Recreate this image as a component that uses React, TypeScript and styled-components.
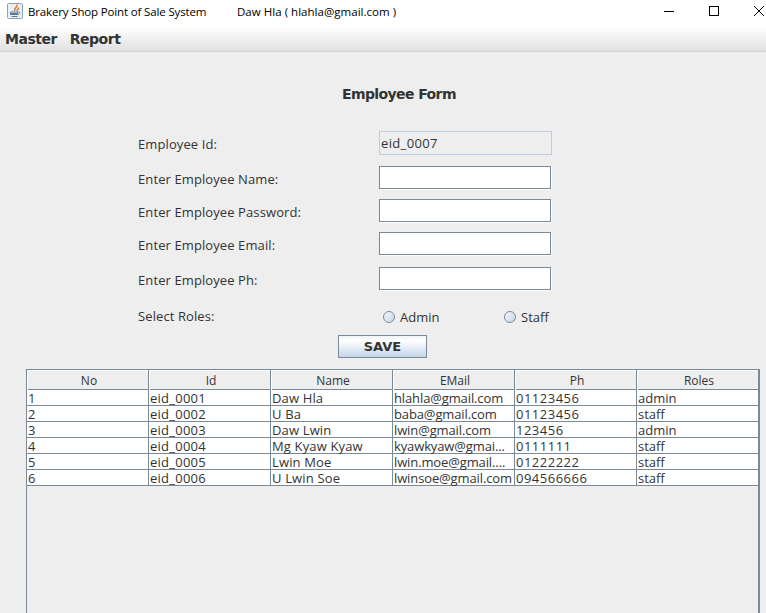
import styled, { createGlobalStyle } from "styled-components";

const GlobalStyle = createGlobalStyle`
  html, body {
    margin: 0;
    padding: 0;
    height: 100%;
    overflow: hidden;
  }
  body {
    font-family: "Open Sans", "Noto Sans", sans-serif;
    color: #333;
  }
`;

const Wrapper = styled.div`
  width: 766px;
  height: 613px;
  background: #eeeeee;
  display: flex;
  flex-direction: column;
  overflow: hidden;
`;

const TitleBar = styled.div`
  height: 27px;
  box-sizing: border-box;
  background: #fff;
  display: flex;
  align-items: center;
  padding: 0 0 4px 7px;
  font-family: "Open Sans", sans-serif;
  font-size: 11.5px;
  color: #000;
  flex-shrink: 0;
`;

const AppIcon = styled.svg`
  display: block;
  margin-top: -1px;
  flex-shrink: 0;
`;

const AppTitle = styled.div`
  margin-left: 5px;
  width: 209px;
  white-space: nowrap;
  letter-spacing: -0.15px;
`;

const UserName = styled.div`
  white-space: nowrap;
  letter-spacing: 0.03px;
`;

const WindowButtons = styled.div`
  margin-left: auto;
  margin-right: -15px;
  margin-top: -1px;
  display: flex;
  align-items: center;
  color: #000;
`;

const WindowButton = styled.div`
  width: 45px;
  height: 22px;
  display: flex;
  align-items: center;
  justify-content: center;
`;

const MenuBar = styled.div`
  height: 25px;
  box-sizing: border-box;
  display: flex;
  align-items: center;
  gap: 13px;
  padding: 0 0 0 5px;
  background: linear-gradient(#ffffff, #e0e0e0);
  border-bottom: 1px solid #d2d2d2;
  flex-shrink: 0;
`;

const MenuItem = styled.div`
  font-family: "DejaVu Sans", sans-serif;
  font-size: 14px;
  font-weight: 700;
  letter-spacing: -0.5px;
  color: #333;
`;

const FormTitle = styled.h1`
  margin: 32px 0 0 342px;
  height: 20px;
  font-family: "DejaVu Sans", sans-serif;
  font-size: 14px;
  line-height: 20px;
  font-weight: 700;
  letter-spacing: -0.6px;
  color: #333;
`;

const Form = styled.div`
  margin-top: 27px;
  padding-left: 138px;
  display: flex;
  flex-direction: column;
`;

const FormRow = styled.div<{ $height: number; $gap: number }>`
  display: grid;
  grid-template-columns: 241px 172px;
  align-items: center;
  height: ${(p) => p.$height}px;
  margin-bottom: ${(p) => p.$gap}px;
`;

const Label = styled.div`
  font-size: 13px;
  line-height: 20px;
  padding-top: 2px;
  letter-spacing: 0.1px;
  color: #333;
  white-space: nowrap;
`;

const TextField = styled.div<{ $disabled?: boolean }>`
  box-sizing: border-box;
  width: ${(p) => (p.$disabled ? "173px" : "172px")};
  height: ${(p) => (p.$disabled ? "100%" : "23px")};
  align-self: start;
  border: 1px solid ${(p) => (p.$disabled ? "#b8cfe5" : "#7a8a99")};
  background: ${(p) => (p.$disabled ? "#eeeeee" : "#fff")};
  box-shadow: ${(p) => (p.$disabled ? "none" : "1px 1px 0 #fff")};
  padding-left: 1px;
  font-size: 13px;
  line-height: 22px;
  letter-spacing: 0.35px;
  color: #333;
`;

const RadioGroup = styled.div`
  display: grid;
  grid-template-columns: 121px 1fr;
  padding-left: 4px;
  transform: translateY(2px);
`;

const RadioOption = styled.label`
  display: flex;
  align-items: center;
  gap: 5px;
  font-size: 13px;
  color: #333;
`;

const RadioDot = styled.span`
  box-sizing: border-box;
  width: 12px;
  height: 12px;
  border-radius: 50%;
  border: 1px solid #7a8a99;
  background: linear-gradient(135deg, #f4f7fb, #c6d7e8);
`;

const SaveRow = styled.div`
  padding-left: 338px;
`;

const SaveButton = styled.button`
  box-sizing: border-box;
  display: block;
  width: 89px;
  height: 23px;
  padding: 0;
  border: 1px solid #7a8a99;
  background: linear-gradient(#f0f5fa, #ffffff 25%, #c2d5e8);
  font-family: "DejaVu Sans", sans-serif;
  font-size: 13px;
  font-weight: 700;
  color: #333;
`;

const TableWrap = styled.div`
  margin: 11px 0 0 26px;
  width: 734px;
  flex: 1;
  box-sizing: border-box;
  border: 1px solid #7a8a99;
  border-right-width: 2px;
  border-bottom: none;
  background: #eeeeee;
`;

const HeaderRow = styled.div`
  display: grid;
  grid-template-columns: repeat(5, 122px) 1fr;
  height: 20px;
  box-sizing: border-box;
  border-bottom: 1px solid #7a8a99;
`;

const HeaderCell = styled.div`
  box-sizing: border-box;
  border-right: 1px solid #7a8a99;
  box-shadow: inset 1px 1px 0 #fff;
  padding-left: 3px;
  text-align: center;
  font-size: 12px;
  line-height: 19px;
  padding-top: 1px;
  color: #333;
  &:last-child {
    border-right: none;
  }
`;

const BodyRow = styled.div`
  display: grid;
  grid-template-columns: repeat(5, 122px) 121px;
  height: 16px;
  box-sizing: border-box;
  background: #fff;
  border-bottom: 1px solid #7a8a99;
`;

const BodyCell = styled.div<{ $spacing: number }>`
  box-sizing: border-box;
  height: 15px;
  border-right: 1px solid #7a8a99;
  padding: 1px 0 0 1px;
  font-size: 13px;
  line-height: 14px;
  letter-spacing: ${(p) => p.$spacing}px;
  color: #333;
  white-space: nowrap;
  &:last-child {
    border-right: none;
  }
`;

const columns = ["No", "Id", "Name", "EMail", "Ph", "Roles"];
// the digits run wider in the reference than in Open Sans
const spacing = [0, 0.25, 0.15, -0.12, 0.5, 0];

const rows = [
  ["1", "eid_0001", "Daw Hla", "hlahla@gmail.com", "01123456", "admin"],
  ["2", "eid_0002", "U Ba", "baba@gmail.com", "01123456", "staff"],
  ["3", "eid_0003", "Daw Lwin", "lwin@gmail.com", "123456", "admin"],
  ["4", "eid_0004", "Mg Kyaw Kyaw", "kyawkyaw@gmai...", "0111111", "staff"],
  ["5", "eid_0005", "Lwin Moe", "lwin.moe@gmail....", "01222222", "staff"],
  ["6", "eid_0006", "U Lwin Soe", "lwinsoe@gmail.com", "094566666", "staff"],
];

const JavaIcon = () => (
  <AppIcon width="16" height="16" viewBox="0 0 16 16">
    <rect x="0.5" y="0.5" width="15" height="15" rx="1" fill="#e9eff6" stroke="#8ca1b6" />
    <path d="M10 1.500C11 4 7 5 7.500 8M11.500 4.500c.5 1.500-1.500 2-1.500 3.500" fill="none" stroke="#e0702c" strokeWidth="1.400" />
    <path d="M3.500 9h7v1.500h-7zM3 11.500h8.500M4.500 13.500h6" fill="none" stroke="#5b7894" strokeWidth="1" />
    <path d="M10.500 9c2.500-.5 3 1.500.5 2.500" fill="none" stroke="#5b7894" strokeWidth="0.900" />
  </AppIcon>
);

const App = () => {
  return (
    <Wrapper>
      <GlobalStyle />
      <TitleBar>
        <JavaIcon />
        <AppTitle>Brakery Shop Point of Sale System</AppTitle>
        <UserName>Daw Hla ( hlahla@gmail.com )</UserName>
        <WindowButtons>
          <WindowButton>
            <svg width="10" height="10" viewBox="0 0 10 10">
              <path d="M0 5.500h10" stroke="#000" strokeWidth="1" />
            </svg>
          </WindowButton>
          <WindowButton>
            <svg width="10" height="10" viewBox="0 0 10 10">
              <rect x="0.500" y="0.500" width="9" height="9" fill="none" stroke="#000" />
            </svg>
          </WindowButton>
          <WindowButton>
            <svg width="10" height="10" viewBox="0 0 10 10">
              <path d="M0 0l10 10M10 0L0 10" stroke="#000" strokeWidth="1" />
            </svg>
          </WindowButton>
        </WindowButtons>
      </TitleBar>
      <MenuBar>
        <MenuItem>Master</MenuItem>
        <MenuItem>Report</MenuItem>
      </MenuBar>
      <FormTitle>Employee Form</FormTitle>
      <Form>
        <FormRow $height={24} $gap={11}>
          <Label>Employee Id:</Label>
          <TextField $disabled>eid_0007</TextField>
        </FormRow>
        <FormRow $height={23} $gap={10}>
          <Label>Enter Employee Name:</Label>
          <TextField />
        </FormRow>
        <FormRow $height={23} $gap={10}>
          <Label>Enter Employee Password:</Label>
          <TextField />
        </FormRow>
        <FormRow $height={23} $gap={12}>
          <Label>Enter Employee Email:</Label>
          <TextField />
        </FormRow>
        <FormRow $height={23} $gap={14}>
          <Label>Enter Employee Ph:</Label>
          <TextField />
        </FormRow>
        <FormRow $height={20} $gap={11}>
          <Label>Select Roles:</Label>
          <RadioGroup>
            <RadioOption>
              <RadioDot />
              Admin
            </RadioOption>
            <RadioOption>
              <RadioDot />
              Staff
            </RadioOption>
          </RadioGroup>
        </FormRow>
      </Form>
      <SaveRow>
        <SaveButton>SAVE</SaveButton>
      </SaveRow>
      <TableWrap>
        <HeaderRow>
          {columns.map((c) => (
            <HeaderCell key={c}>{c}</HeaderCell>
          ))}
        </HeaderRow>
        {rows.map((r) => (
          <BodyRow key={r[0]}>
            {r.map((v, i) => (
              <BodyCell key={i} $spacing={spacing[i]}>
                {v}
              </BodyCell>
            ))}
          </BodyRow>
        ))}
      </TableWrap>
    </Wrapper>
  );
};

export default App;
